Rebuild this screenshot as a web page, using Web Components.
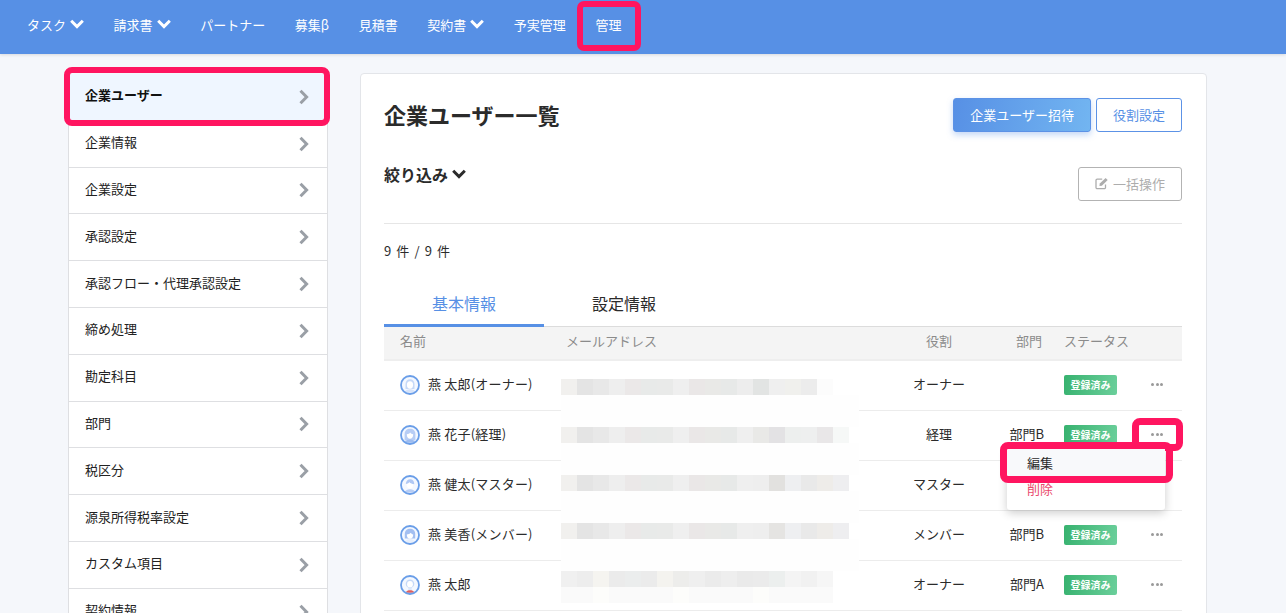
<!DOCTYPE html>
<html lang="ja">
<head>
<meta charset="utf-8">
<title>企業ユーザー一覧</title>
<style>
  html, body { margin: 0; height: 613px; overflow: hidden; }
  body { background: #f5f7fb; color: #2b2b2b; font: 13px "Noto Sans CJK JP", "Noto Sans", sans-serif; }
</style>
</head>
<body>
<app-shell>
  <top-nav>
    <nav-item caret>タスク</nav-item>
    <nav-item caret>請求書</nav-item>
    <nav-item>パートナー</nav-item>
    <nav-item>募集β</nav-item>
    <nav-item>見積書</nav-item>
    <nav-item caret>契約書</nav-item>
    <nav-item>予実管理</nav-item>
    <nav-item marked>管理</nav-item>
  </top-nav>
  <side-menu slot="side">
    <side-item active marked>企業ユーザー</side-item>
    <side-item>企業情報</side-item>
    <side-item>企業設定</side-item>
    <side-item>承認設定</side-item>
    <side-item>承認フロー・代理承認設定</side-item>
    <side-item>締め処理</side-item>
    <side-item>勘定科目</side-item>
    <side-item>部門</side-item>
    <side-item>税区分</side-item>
    <side-item>源泉所得税率設定</side-item>
    <side-item>カスタム項目</side-item>
    <side-item>契約情報</side-item>
  </side-menu>
  <user-card slot="main">
    <user-row avatar="0" name="燕 太郎(オーナー)" role="オーナー" dept="" blur="0"></user-row>
    <user-row avatar="1" name="燕 花子(経理)" role="経理" dept="部門B" blur="1" open></user-row>
    <user-row avatar="2" name="燕 健太(マスター)" role="マスター" dept="" blur="2"></user-row>
    <user-row avatar="3" name="燕 美香(メンバー)" role="メンバー" dept="部門B" blur="3"></user-row>
    <user-row avatar="4" name="燕 太郎" role="オーナー" dept="部門A" blur="4"></user-row>
  </user-card>
</app-shell>

<script>
const PINK = '#ff1560';
const CARET = color => `<svg width="14" height="10" viewBox="0 0 14 10"><path d="M1.200 1.800L7 7.600l5.800-5.800" fill="none" stroke="${color}" stroke-width="3"/></svg>`;

class AppShell extends HTMLElement {
  constructor() {
    super();
    this.attachShadow({ mode: 'open' }).innerHTML = `
      <style>
        :host { display: block; height: 613px; overflow: hidden; }
        .body { display: flex; align-items: flex-start; gap: 32px; padding: 20px 0 0 68px; }
      </style>
      <slot></slot>
      <div class="body"><slot name="side"></slot><slot name="main"></slot></div>`;
  }
}

class TopNav extends HTMLElement {
  constructor() {
    super();
    this.attachShadow({ mode: 'open' }).innerHTML = `
      <style>
        :host { display: flex; gap: 29.600px; height: 54px; padding-left: 27px; background: #5790e5;
                box-shadow: 0 1px 3px rgba(0,0,0,.12); position: relative; }
      </style>
      <slot></slot>`;
  }
}

class NavItem extends HTMLElement {
  constructor() {
    super();
    this.attachShadow({ mode: 'open' }).innerHTML = `
      <style>
        :host { display: flex; align-items: center; gap: 4px; position: relative; color: #fff;
                font-size: 13px; padding-bottom: 6px; box-sizing: border-box; height: 54px; white-space: nowrap; }
        :host([marked])::after { content: ""; position: absolute; left: -18px; right: -20px; top: 1px; bottom: 3px;
                border: 6px solid ${PINK}; border-radius: 7px; }
      </style>
      <slot></slot>${this.hasAttribute('caret') ? CARET('#fff') : ''}`;
  }
}

class SideMenu extends HTMLElement {
  constructor() {
    super();
    this.attachShadow({ mode: 'open' }).innerHTML = `
      <style>
        :host { display: block; flex: 0 0 260px; box-sizing: border-box; background: #fff;
                border: 1px solid #dedfe2; border-top: 0; }
      </style>
      <slot></slot>`;
  }
}

class SideItem extends HTMLElement {
  constructor() {
    super();
    this.attachShadow({ mode: 'open' }).innerHTML = `
      <style>
        :host { display: flex; align-items: center; justify-content: space-between; position: relative;
                height: 46.8px; box-sizing: border-box; padding: 0 18px 0 16px; border-bottom: 1px solid #dedfe2;
                color: #222; font-size: 13px; white-space: nowrap; }
        :host([active]) { background: #eff6ff; font-weight: 700; color: #111; }
        :host([marked])::after { content: ""; position: absolute; left: -5px; right: -3px; top: -7px; bottom: -6px;
                border: 6px solid ${PINK}; border-radius: 8px; }
        span { margin-top: -4px; }
        svg { display: block; }
      </style>
      <span><slot></slot></span>
      <svg width="10" height="16" viewBox="0 0 10 16"><path d="M1.500 1.800L7.600 8l-6.100 6.200" fill="none" stroke="#9a9fa6" stroke-width="3"/></svg>`;
  }
}

class ActionButton extends HTMLElement {
  constructor() {
    super();
    this.attachShadow({ mode: 'open' }).innerHTML = `
      <style>
        :host { display: inline-flex; align-items: center; justify-content: center; gap: 4px; box-sizing: border-box;
                height: 34px; padding: 0 16px 2px; border: 1px solid #5c92e6; border-radius: 3px; background: #fff;
                color: #5790e5; font-size: 13px; white-space: nowrap; }
        :host([kind="primary"]) { background: linear-gradient(100deg, #5790e5, #72b5f1); color: #fff;
                box-shadow: 0 3px 6px rgba(87,144,229,.35); }
        :host([kind="muted"]) { border-color: #b3b3b3; color: #adadad; }
      </style>
      <slot></slot>`;
  }
}

class UserCard extends HTMLElement {
  constructor() {
    super();
    this.attachShadow({ mode: 'open' }).innerHTML = `
      <style>
        :host { display: block; flex: 0 0 847px; box-sizing: border-box; height: 620px; padding: 24px 24px 24px 23px;
                background: #fff; border: 1px solid #e3e5e9; border-radius: 4px; margin-top: -1px; }
        .head { display: flex; justify-content: space-between; align-items: center; }
        h1 { margin: -3px 0 0; font-size: 22px; font-weight: 700; line-height: 30px; color: #2b2b2b; }
        .btns { display: flex; gap: 5px; }
        .filter { display: flex; justify-content: space-between; align-items: flex-start; margin-top: 35px;
                padding-bottom: 22px; border-bottom: 1px solid #e6e6e6; }
        .filter b { display: flex; align-items: center; gap: 4px; font-size: 16px; line-height: 18px; margin-top: -2px; }
        .count { margin-top: 17px; line-height: 20px; font-size: 13px; letter-spacing: 1.100px; }
        .tabs { display: flex; margin-top: 22px; height: 44px; box-sizing: border-box; border-bottom: 1px solid #dcdcdc; }
        .tab { width: 160px; height: 44px; box-sizing: border-box; text-align: center; font-size: 16px; line-height: 40px; color: #2b2b2b; }
        .tab.on { color: #5790e5; border-bottom: 3px solid #5790e5; }
        .row { display: grid; grid-template-columns: 182px 300px 146px 32px 20px 68px 50px; align-items: center;
                height: 34px; box-sizing: border-box; padding-bottom: 5px; background: #f4f4f4; border-bottom: 2px solid #eeeeee; color: #8b8b8b; }
        .row span:first-child { padding-left: 16px; }
        .role { text-align: center; }
        .dept { justify-self: end; margin-right: 2px; }
        .stat { grid-column: 6; white-space: nowrap; }
      </style>
      <div class="head">
        <h1>企業ユーザー一覧</h1>
        <div class="btns">
          <action-button kind="primary">企業ユーザー招待</action-button>
          <action-button>役割設定</action-button>
        </div>
      </div>
      <div class="filter">
        <b>絞り込み ${CARET('#2b2b2b')}</b>
        <action-button kind="muted">
          <svg width="14" height="13" viewBox="0 0 14 13"><path d="M10.500 7.500v3a1.200 1.200 0 0 1-1.200 1.200H2.200A1.200 1.200 0 0 1 1 10.500V3.300a1.200 1.200 0 0 1 1.200-1.200h5" fill="none" stroke="#adadad" stroke-width="1.300"/><path d="M4.800 6.600L10.600 .9l2.100 2.100-5.800 5.700-2.500.4z" fill="#adadad"/></svg>
          一括操作
        </action-button>
      </div>
      <div class="count">9 件 / 9 件</div>
      <div class="tabs"><div class="tab on">基本情報</div><div class="tab">設定情報</div></div>
      <div class="row"><span>名前</span><span>メールアドレス</span><span class="role">役割</span><span class="dept">部門</span><span class="stat">ステータス</span></div>
      <slot></slot>`;
  }
}

// hair / face variations of the small round avatars
const AVATARS = [
  `<path d="M5.500 14V9c0-3 2-4.800 4.500-4.800S14.500 6 14.500 9v5z" fill="#c6d9f8"/><ellipse cx="10" cy="10" rx="3.100" ry="3.700" fill="#fff"/><path d="M4.500 17.500c1-2.700 3-3.300 5.500-3.300s4.500.6 5.500 3.300z" fill="#d6e3fa"/>`,
  `<path d="M4.600 15.500V9c0-3.400 2.400-5.300 5.400-5.300s5.400 1.900 5.400 5.300v6.500z" fill="#b7cdf5"/><path d="M6.800 9.300c1.500-.2 2.700-.8 3.500-1.800.6 1 1.500 1.600 2.900 1.800.1 2.800-1.300 4.500-3.200 4.500s-3.300-1.700-3.200-4.500z" fill="#fff"/><path d="M4.500 17.800c1-2.800 3-3.400 5.500-3.400s4.500.6 5.500 3.400z" fill="#9dbcf0"/>`,
  `<path d="M5.800 9c.2-3 2-4.700 4.400-4.700S14.300 6 14.300 9.200c-2.200-.2-4-.8-5-2.200-.5 1.100-1.800 1.800-3.500 2z" fill="#b0c8f4"/><path d="M6.700 9.300c1.300-.2 2.200-.8 2.700-1.500 1 .9 2.400 1.400 3.900 1.500 0 2.700-1.400 4.400-3.300 4.400s-3.300-1.700-3.300-4.400z" fill="#fff"/><path d="M4.500 17.500c1-2.700 3-3.300 5.500-3.300s4.500.6 5.500 3.300z" fill="#b7cdf5"/>`,
  `<path d="M4.800 13.500V8.800C4.800 5.600 7.200 3.700 10 3.700s5.200 1.900 5.200 5.100v4.700z" fill="#a3bff1"/><path d="M6.800 9.400c1.600 0 3-.6 3.900-1.700.5.900 1.300 1.500 2.500 1.700.1 2.700-1.300 4.400-3.200 4.400s-3.300-1.700-3.200-4.400z" fill="#fff"/><path d="M5 17.500c1-2.800 2.800-3.500 5-3.500s4 .7 5 3.500z" fill="#e6eefc"/>`,
  `<circle cx="10" cy="8.800" r="4.300" fill="#c6d9f8"/><ellipse cx="10" cy="9.300" rx="2.900" ry="3.300" fill="#fff"/><path d="M8.300 12.300h3.400v2.700H8.300z" fill="#dbe7fb"/><path d="M5.500 17.800c1-1.900 2.500-2.500 4.500-2.500s3.500.6 4.500 2.500z" fill="#e0605f"/>`
];

class UserAvatar extends HTMLElement {
  constructor() {
    super();
    const art = AVATARS[+this.getAttribute('n') || 0];
    this.attachShadow({ mode: 'open' }).innerHTML = `
      <style>:host { display: block; width: 20px; height: 20px; flex: none; } svg { display: block; }</style>
      <svg width="20" height="20" viewBox="0 0 20 20"><circle cx="10" cy="10" r="9" fill="#f4f8ff"/>${art}<circle cx="10" cy="10" r="9" fill="none" stroke="#6a9ee8" stroke-width="1.800"/></svg>`;
  }
}

const SHARED = ['#f1f0ee','#e4e4e4','#e8e8e8','#eeeeee','#ebe8e8','#e8eae9','#e9eae9','#efefef','#eae7e7','#e9e9e7','#e7e9e8'];
const MOSAIC = [
  [...SHARED,'#ededed','#e2e4e3','#efefef','#f0f0ed','#ececec','#fcfcfc'],
  [...SHARED,'#efefef','#e9e9e7','#e3e2e4','#edefee','#eeefef','#e9e7e8','#f6f8f7'],
  [...SHARED,'#efefef','#eeeeee','#e2e1df','#eeeff1','#e9e9e9','#eeece9','#eeeef0'],
  [...SHARED,'#efefef','#eeeeee','#e5e4e2','#eeeff1','#e9e9e9','#eeece9','#eeeef0'],
  ['#f0f0f0','#ededed','#f5f4f0','#ebebeb','#ebeded','#ebebeb','#f4f3ef','#ededeb','#efefef','#ebebeb','#eeeeee','#eaeaea','#ebebeb','#ecefee','#f4f4f4','#f1f1f1','#f6f6f6']
];

// redacted mail address: a strip of 16px grey cells on a white patch, 48px apart while rows are 50px
class BlurMosaic extends HTMLElement {
  constructor() {
    super();
    const n = +this.getAttribute('n');
    const cells = MOSAIC[n].map(c => `<i style="background:${c}"></i>`).join('');
    const under = n === 4 ? `<div class="strip">${MOSAIC[n].map((c, k) => `<i style="background:${k % 5 === 2 ? '#fdfdfb' : '#fafafa'}"></i>`).join('')}</div>` : '';
    this.attachShadow({ mode: 'open' }).innerHTML = `
      <style>
        :host { display: block; position: absolute; left: 177px; top: ${18 - 2 * n}px; width: 298px; height: ${n === 4 ? 32 : 48}px;
                background: #fefefe; z-index: 1; }
        .strip { display: flex; height: 16px; background: #fff; }
        .strip i { flex: 0 0 16px; }
      </style>
      <div class="strip">${cells}</div>${under}`;
  }
}

class UserRow extends HTMLElement {
  constructor() {
    super();
    const a = k => this.getAttribute(k) || '';
    const menu = this.hasAttribute('open') ? `
      <row-menu>
        <menu-entry marked>編集</menu-entry>
        <menu-entry danger>削除</menu-entry>
      </row-menu>` : '';
    this.attachShadow({ mode: 'open' }).innerHTML = `
      <style>
        :host { display: grid; grid-template-columns: 182px 300px 146px 32px 20px 68px 50px; align-items: center;
                position: relative; height: 50px; box-sizing: border-box; padding-bottom: 2px; border-bottom: 1px solid #ececec; font-size: 13px; color: #2b2b2b; }
        :host([open]) { z-index: 3; }
        .who { display: flex; align-items: center; gap: 8px; padding-left: 16px; white-space: nowrap; letter-spacing: .2px; }
        .who span { margin-top: -2px; }
        .role { grid-column: 3; text-align: center; white-space: nowrap; margin-top: -2px; }
        .dept { grid-column: 4; justify-self: end; white-space: nowrap; margin-top: -2px; }
        status-badge { grid-column: 6; }
        .dots { grid-column: 7; justify-self: center; position: relative; display: flex; gap: 1.500px; margin-top: -1px; }
        .dots i { width: 3px; height: 3px; border-radius: 50%; background: #9a9a9a; }
        :host([open]) .dots::after { content: ""; position: absolute; left: -19px; right: -20px; top: -15px; bottom: -15px;
                border: 7px solid ${PINK}; border-radius: 8px; }
      </style>
      <div class="who"><user-avatar n="${a('avatar')}"></user-avatar><span>${a('name')}</span></div>
      <blur-mosaic n="${a('blur')}"></blur-mosaic>
      <span class="role">${a('role')}</span>
      <span class="dept">${a('dept')}</span>
      <status-badge>登録済み</status-badge>
      <div class="dots"><i></i><i></i><i></i></div>${menu}`;
  }
}

class StatusBadge extends HTMLElement {
  constructor() {
    super();
    this.attachShadow({ mode: 'open' }).innerHTML = `
      <style>
        :host { display: flex; align-items: center; justify-content: center; width: 53px; height: 20px; border-radius: 2px;
                background: linear-gradient(100deg, #37b26f, #6bcf9b); color: #fff; font-size: 10px; font-weight: 700; white-space: nowrap; }
      </style>
      <slot></slot>`;
  }
}

class RowMenu extends HTMLElement {
  constructor() {
    super();
    this.attachShadow({ mode: 'open' }).innerHTML = `
      <style>
        :host { display: block; position: absolute; left: 623px; top: 37px; width: 158px; height: 62px; box-sizing: border-box;
                background: #fff; border-radius: 3px; box-shadow: 0 3px 10px rgba(0,0,0,.2); z-index: 4; }
      </style>
      <slot></slot>`;
  }
}

class MenuEntry extends HTMLElement {
  constructor() {
    super();
    this.attachShadow({ mode: 'open' }).innerHTML = `
      <style>
        :host { display: flex; align-items: center; position: relative; height: 26px; box-sizing: border-box; padding: 0 0 5px 20px; font-size: 13px; color: #2b2b2b; }
        :host([marked]) { height: 30px; padding-bottom: 2px; background: #f8f9fb; }
        :host([danger]) { color: #ea4a6d; }
        :host([marked])::after { content: ""; position: absolute; left: -7px; right: -8px; top: -6px; bottom: -5px;
                border: 7px solid ${PINK}; border-radius: 8px; }
      </style>
      <slot></slot>`;
  }
}

customElements.define('app-shell', AppShell);
customElements.define('top-nav', TopNav);
customElements.define('nav-item', NavItem);
customElements.define('side-menu', SideMenu);
customElements.define('side-item', SideItem);
customElements.define('action-button', ActionButton);
customElements.define('user-avatar', UserAvatar);
customElements.define('blur-mosaic', BlurMosaic);
customElements.define('status-badge', StatusBadge);
customElements.define('row-menu', RowMenu);
customElements.define('menu-entry', MenuEntry);
customElements.define('user-row', UserRow);
customElements.define('user-card', UserCard);
</script>
</body>
</html>
